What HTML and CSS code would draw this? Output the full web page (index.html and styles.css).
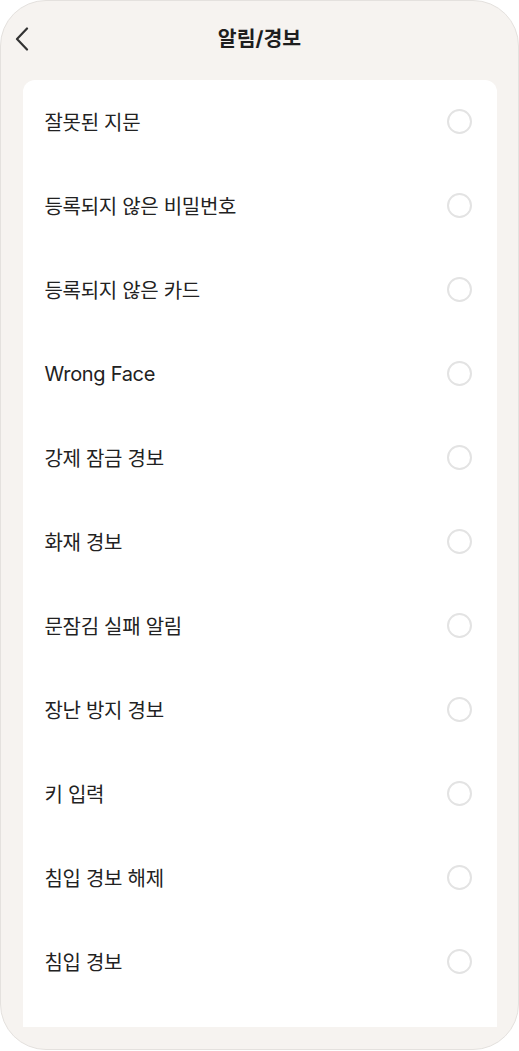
FILE: index.html
```html
<!DOCTYPE html>
<html lang="ko">
<head>
<meta charset="utf-8">
<title>알림/경보</title>
<link rel="stylesheet" href="styles.css">
</head>
<body>
<div class="phone">
  <header class="header">
    <button class="back" aria-label="뒤로">
      <svg width="14" height="24" viewBox="0 0 14 24"><path d="M12 1.5 L2 12 L12 22.5" fill="none" stroke="#333" stroke-width="2.2" stroke-linecap="round" stroke-linejoin="round"/></svg>
    </button>
    <h1 class="title">알림/경보</h1>
  </header>
  <main class="card">
    <div class="row"><span class="label">잘못된 지문</span><span class="radio"></span></div>
    <div class="row"><span class="label">등록되지 않은 비밀번호</span><span class="radio"></span></div>
    <div class="row"><span class="label">등록되지 않은 카드</span><span class="radio"></span></div>
    <div class="row"><span class="label">Wrong Face</span><span class="radio"></span></div>
    <div class="row"><span class="label">강제 잠금 경보</span><span class="radio"></span></div>
    <div class="row"><span class="label">화재 경보</span><span class="radio"></span></div>
    <div class="row"><span class="label">문잠김 실패 알림</span><span class="radio"></span></div>
    <div class="row"><span class="label">장난 방지 경보</span><span class="radio"></span></div>
    <div class="row"><span class="label">키 입력</span><span class="radio"></span></div>
    <div class="row"><span class="label">침입 경보 해제</span><span class="radio"></span></div>
    <div class="row"><span class="label">침입 경보</span><span class="radio"></span></div>
  </main>
</div>
</body>
</html>
```

FILE: styles.css
```css
* { box-sizing: border-box; }
html, body { margin: 0; padding: 0; background: #ffffff; }
body {
  font-family: Inter, "Noto Sans CJK KR", "Noto Sans", sans-serif;
  color: #222;
}
.phone {
  width: 519px;
  height: 1050px;
  border: 1.5px solid #e4e1de;
  border-radius: 46px;
  background: #f6f3f0;
  overflow: hidden;
  display: flex;
  flex-direction: column;
}
.header {
  height: 78.5px;
  display: flex;
  align-items: center;
  justify-content: center;
  position: relative;
  padding-bottom: 6px;
}
.back {
  position: absolute;
  left: 14px;
  top: 26px;
  background: none;
  border: 0;
  padding: 0;
  width: 16px;
  height: 24px;
  display: flex;
}
.title {
  margin: 0;
  font-size: 20.5px;
  font-weight: 700;
  color: #1e1e1e;
  letter-spacing: 0;
}
.card {
  margin: 0 21.5px;
  height: 947px;
  background: #fff;
  border-radius: 12px 12px 0 0;
  padding: 0 25px 23px 22px;
  display: flex;
  flex-direction: column;
}
.row {
  height: 84px;
  display: flex;
  align-items: center;
  justify-content: space-between;
}
.label {
  font-size: 20px;
  color: #222;
  letter-spacing: -0.3px;
}
.radio {
  width: 25px;
  height: 25px;
  border: 2px solid #e3e3e3;
  border-radius: 50%;
}
```
